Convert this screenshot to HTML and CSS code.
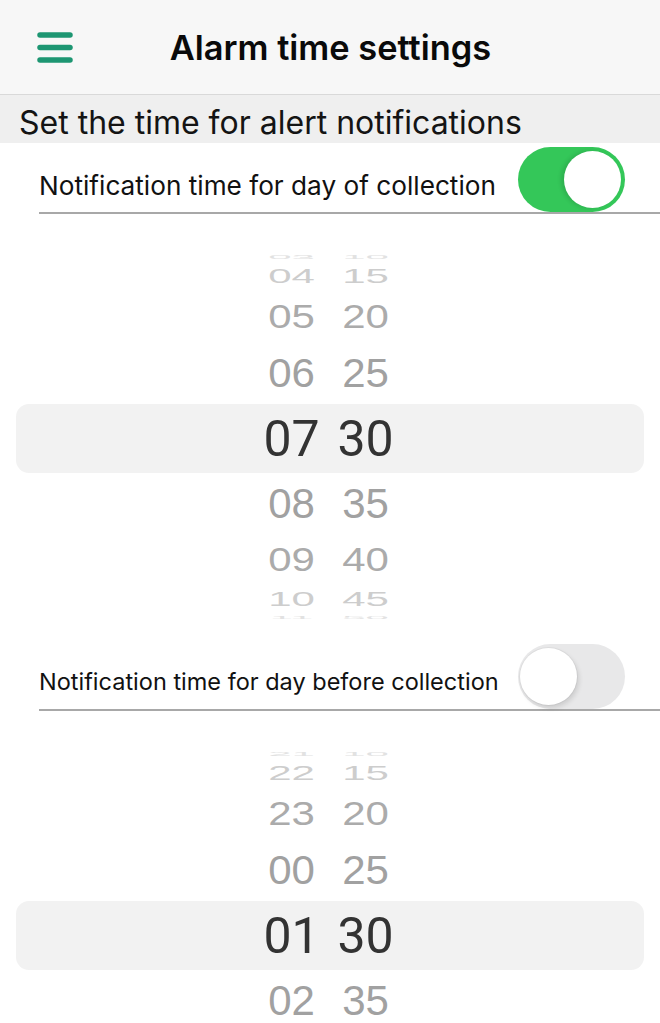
FILE: index.html
```html
<!DOCTYPE html>
<html lang="en">
<head>
<meta charset="utf-8">
<title>Alarm time settings</title>
<link rel="stylesheet" href="styles.css">
</head>
<body>
<header class="topbar">
  <button class="menu" aria-label="Menu">
    <svg width="36" height="31" viewBox="0 0 36 31"><g stroke="#1d9672" stroke-width="5.5" stroke-linecap="round"><line x1="3" y1="3" x2="33" y2="3"/><line x1="3" y1="15.5" x2="33" y2="15.5"/><line x1="3" y1="28" x2="33" y2="28"/></g></svg>
  </button>
  <h1 class="title">Alarm time settings</h1>
</header>
<div class="section">Set the time for alert notifications</div>

<div class="setting">
  <span class="label">Notification time for day of collection</span>
  <span class="switch on"><span class="knob"></span></span>
</div>
<div class="picker">
  <div class="wr k4 up"><span>03</span><span>10</span></div>
  <div class="wr k3 up"><span>04</span><span>15</span></div>
  <div class="wr k2 up"><span>05</span><span>20</span></div>
  <div class="wr k1 up"><span>06</span><span>25</span></div>
  <div class="wr sel"><span>07</span><span>30</span></div>
  <div class="wr k1 dn"><span>08</span><span>35</span></div>
  <div class="wr k2 dn"><span>09</span><span>40</span></div>
  <div class="wr k3 dn"><span>10</span><span>45</span></div>
  <div class="wr k4 dn"><span>11</span><span>50</span></div>
</div>

<div class="setting">
  <span class="label small">Notification time for day before collection</span>
  <span class="switch off"><span class="knob"></span></span>
</div>
<div class="picker">
  <div class="wr k4 up"><span>21</span><span>10</span></div>
  <div class="wr k3 up"><span>22</span><span>15</span></div>
  <div class="wr k2 up"><span>23</span><span>20</span></div>
  <div class="wr k1 up"><span>00</span><span>25</span></div>
  <div class="wr sel"><span>01</span><span>30</span></div>
  <div class="wr k1 dn"><span>02</span><span>35</span></div>
  <div class="wr k2 dn"><span>03</span><span>40</span></div>
  <div class="wr k3 dn"><span>04</span><span>45</span></div>
  <div class="wr k4 dn"><span>05</span><span>50</span></div>
</div>
</body>
</html>
```
FILE: styles.css
```css
* { box-sizing: border-box; }
html, body { margin: 0; padding: 0; background: #fff; }
body {
  width: 660px;
  height: 1023px;
  overflow: hidden;
  font-family: Inter, "Liberation Sans", Arial, sans-serif;
  color: #111;
}

.topbar {
  height: 95px;
  background: #f7f7f7;
  border-bottom: 1px solid #d9d9d9;
  display: flex;
  align-items: center;
  justify-content: center;
  position: relative;
}
.menu {
  position: absolute;
  left: 37px;
  top: 31.5px;
  border: 0;
  padding: 0;
  background: none;
  display: block;
}
.menu svg { display: block; }
.title {
  margin: 0;
  font-size: 34.4px;
  font-weight: 600;
  color: #0a0a0a;
  letter-spacing: 0;
  padding-left: 1px;
}

.section {
  height: 48px;
  background: #efefef;
  padding-left: 19px;
  font-size: 32px;
  line-height: 55px;
  color: #141414;
}

.setting {
  margin-left: 39px;
  height: 71px;
  padding-top: 4px;
  padding-right: 35px;
  border-bottom: 2px solid #a8a8a8;
  display: flex;
  align-items: center;
  justify-content: space-between;
}
.label {
  font-size: 26.2px;
  margin-top: 11px;
  color: #111;
  white-space: nowrap;
}
.label.small { font-size: 23.5px; margin-top: 10px; }

.switch {
  width: 107px;
  height: 65px;
  border-radius: 33px;
  display: flex;
  align-items: center;
  padding: 0 4px;
  flex: none;
}
.switch .knob {
  width: 57px;
  height: 57px;
  border-radius: 50%;
  background: #fff;
}
.switch.on { background: #34c759; justify-content: flex-end; }
.switch.on .knob { box-shadow: -3px 0 4px rgba(0,0,0,0.12); }
.switch.off { background: #e8e8e9; justify-content: flex-start; padding-left: 2px; }
.switch.off .knob { box-shadow: 2px 3px 5px rgba(0,0,0,0.12), 0 0 0 1px rgba(0,0,0,0.04); }

.picker {
  padding: 38px 0 19px;
}
.wr {
  display: flex;
  justify-content: center;
  align-items: center;
  padding-right: 3px;
  font-family: "Liberation Sans", Arial, sans-serif;
  font-size: 42px;
  line-height: 1;
}
.wr span {
  display: block;
  width: 74px;
  flex: none;
  text-align: center;
}
.wr.k4 { color: #e2e2e2; }
.wr.k4.up { height: 10px; }
.wr.k4.up span { transform: scaleY(0.14); }
.wr.k4.dn { height: 6px; }
.wr.k4.dn span { transform: scaleY(0.1); }
.wr.k3 { color: #cdcdcd; }
.wr.k3.up { height: 28px; }
.wr.k3.up span { transform: scaleY(0.5); }
.wr.k3.dn { height: 30px; }
.wr.k3.dn span { transform: scaleY(0.46); }
.wr.k2 { color: #ababab; }
.wr.k2.up { height: 54px; }
.wr.k2.up span { transform: scaleY(0.77); }
.wr.k2.dn { height: 50px; }
.wr.k2.dn span { transform: scaleY(0.8); }
.wr.k1 { color: #a1a1a1; }
.wr.k1.up { height: 60px; }
.wr.k1.up span { transform: scaleY(0.96); }
.wr.k1.dn { height: 62px; }
.wr.k1.dn span { transform: scaleY(0.99); }
.wr.sel {
  height: 69px;
  margin: 0 16px;
  background: #f2f2f2;
  border-radius: 13px;
  font-family: Roboto, "Liberation Sans", sans-serif;
  font-size: 50px;
  color: #333;
  padding-right: 7px;
  padding-left: 0;
}
.wr.sel span:first-child { width: 78px; }
.wr.sel span:last-child { width: 70px; }
```
